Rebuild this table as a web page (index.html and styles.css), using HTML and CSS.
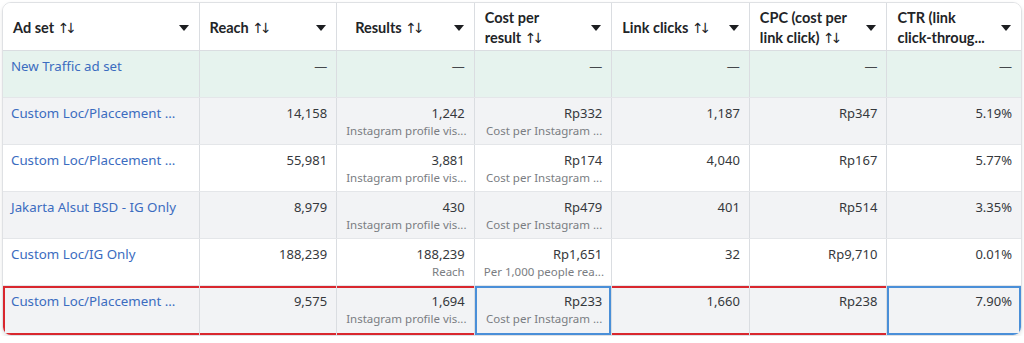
FILE: index.html
```html
<!DOCTYPE html>
<html>
<head>
<meta charset="utf-8">
<link rel="stylesheet" href="styles.css">
</head>
<body>
<div class="card">
<table class="grid">
<colgroup>
<col class="c-name"><col class="c-num"><col class="c-num"><col class="c-num"><col class="c-num"><col class="c-num"><col class="c-last">
</colgroup>
<thead>
<tr>
<th><div class="hd"><span class="ht">Ad set <span class="sort">↑↓</span></span><span class="caret"></span></div></th>
<th><div class="hd"><span class="ht">Reach <span class="sort">↑↓</span></span><span class="caret"></span></div></th>
<th><div class="hd ind"><span class="ht">Results <span class="sort">↑↓</span></span><span class="caret"></span></div></th>
<th><div class="hd"><span class="ht">Cost per<br>result <span class="sort">↑↓</span></span><span class="caret"></span></div></th>
<th><div class="hd"><span class="ht">Link clicks <span class="sort">↑↓</span></span><span class="caret"></span></div></th>
<th><div class="hd"><span class="ht">CPC (cost per<br>link click) <span class="sort">↑↓</span></span><span class="caret"></span></div></th>
<th><div class="hd"><span class="ht">CTR (link<br>click-throug...</span><span class="caret"></span></div></th>
</tr>
</thead>
<tbody>
<tr class="r-new">
<td class="name">New Traffic ad set</td>
<td>—</td><td>—</td><td>—</td><td>—</td><td>—</td><td>—</td>
</tr>
<tr class="r-alt">
<td class="name">Custom Loc/Placcement ...</td>
<td>14,158</td>
<td>1,242<div class="sub">Instagram profile vis...</div></td>
<td>Rp332<div class="sub">Cost per Instagram ...</div></td>
<td>1,187</td><td>Rp347</td><td>5.19%</td>
</tr>
<tr>
<td class="name">Custom Loc/Placcement ...</td>
<td>55,981</td>
<td>3,881<div class="sub">Instagram profile vis...</div></td>
<td>Rp174<div class="sub">Cost per Instagram ...</div></td>
<td>4,040</td><td>Rp167</td><td>5.77%</td>
</tr>
<tr class="r-alt">
<td class="name">Jakarta Alsut BSD - IG Only</td>
<td>8,979</td>
<td>430<div class="sub">Instagram profile vis...</div></td>
<td>Rp479<div class="sub">Cost per Instagram ...</div></td>
<td>401</td><td>Rp514</td><td>3.35%</td>
</tr>
<tr>
<td class="name">Custom Loc/IG Only</td>
<td>188,239</td>
<td>188,239<div class="sub">Reach</div></td>
<td>Rp1,651<div class="sub">Per 1,000 people rea...</div></td>
<td>32</td><td>Rp9,710</td><td>0.01%</td>
</tr>
<tr class="r-alt r-sel">
<td class="name">Custom Loc/Placcement ...</td>
<td>9,575</td>
<td>1,694<div class="sub">Instagram profile vis...</div></td>
<td class="focus">Rp233<div class="sub">Cost per Instagram ...</div></td>
<td>1,660</td><td>Rp238</td><td class="focus">7.90%</td>
</tr>
</tbody>
</table>
</div>
</body>
</html>
```

FILE: styles.css
```css
html, body {
  margin: 0;
  padding: 0;
  background: #ffffff;
}
body {
  padding: 2px 3px 0 2px;
  font-family: "Noto Sans", "Open Sans", sans-serif;
  color: #1c1e21;
}
.card {
  border: 1px solid #dfe1e4;
  border-radius: 9px;
  overflow: hidden;
  box-shadow: 0 2px 4px rgba(0,0,0,0.10);
  width: 1018px;
}
.grid {
  border-collapse: collapse;
  table-layout: fixed;
  width: 1018px;
}
.c-name { width: 196px; }
.c-num { width: 137.5px; }
.c-last { width: 134px; }
th, td {
  border-right: 1px solid #dadde1;
  border-bottom: 1px solid #e4e6e9;
  padding: 0;
  vertical-align: top;
}
th:last-child, td:last-child { border-right: none; }
th {
  height: 47px;
  background: #ffffff;
  text-align: left;
  vertical-align: middle;
  border-bottom: 1px solid #dadde1;
}
.hd {
  display: flex;
  align-items: center;
  justify-content: space-between;
  padding: 2px 10px 0 10px;
}
.hd.ind { padding-left: 18px; }
.ht {
  font-family: "Lato", sans-serif;
  font-weight: 700;
  font-size: 14.5px;
  line-height: 20px;
  color: #222427;
}
.sort {
  font-family: "DejaVu Sans", sans-serif;
  font-weight: 400;
  font-size: 14px;
  letter-spacing: -4px;
}
.caret {
  width: 0;
  height: 0;
  border-left: 5px solid transparent;
  border-right: 5px solid transparent;
  border-top: 6px solid #1c1e21;
  flex: none;
  margin-top: 1px;
}
td {
  height: 47px;
  padding: 6px 9px 0 9px;
  font-size: 13px;
  line-height: 18px;
  text-align: right;
  color: #35383c;
  box-sizing: border-box;
}
td.name {
  text-align: left;
  color: #3b6cc0;
  padding-left: 8px;
  white-space: nowrap;
  font-size: 13.3px;
}
.sub {
  font-size: 11.5px;
  line-height: 18px;
  color: #7a7d82;
  white-space: nowrap;
}
.r-new td { background: #e6f3ee; color: #44474b; }
.r-new td.name { color: #3b6cc0; }
.r-alt td { background: #f2f3f5; }
.r-sel td {
  box-shadow: inset 0 2px 0 #d9272e, inset 0 -2px 0 #d9272e;
  height: 49px;
  border-bottom: none;
}
.r-sel td:first-child {
  box-shadow: inset 2px 0 0 #d9272e, inset 0 2px 0 #d9272e, inset 0 -2px 0 #d9272e;
}
.r-sel td.focus {
  box-shadow: inset 0 0 0 2px #4a8fd8;
}
```
